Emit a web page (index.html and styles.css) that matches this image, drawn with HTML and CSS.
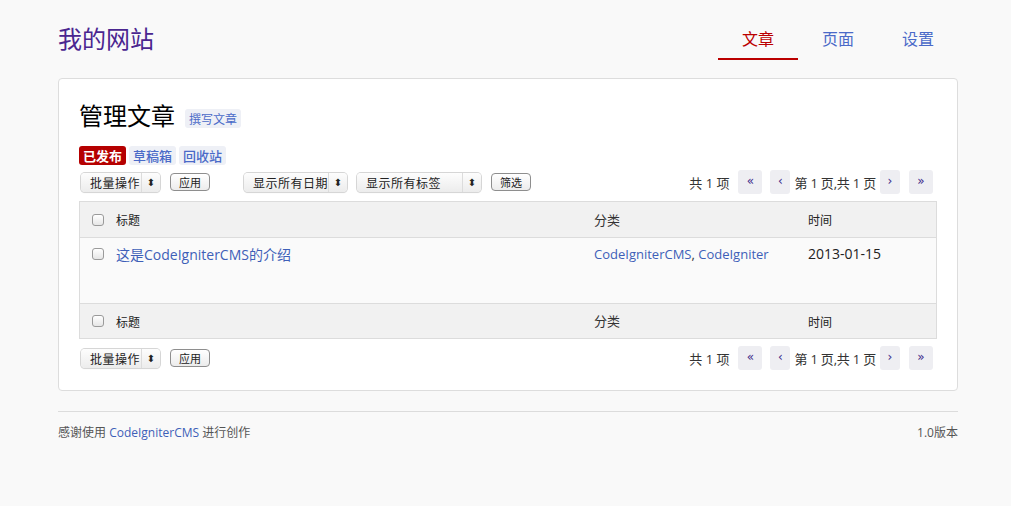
FILE: index.html
```html
<!DOCTYPE html>
<html lang="zh">
<head>
<meta charset="utf-8">
<title>我的网站</title>
<link rel="stylesheet" href="styles.css">
</head>
<body>
<div class="page">
  <header class="top">
    <div class="brand">我的网站</div>
    <nav class="nav">
      <a class="nav-item active">文章</a>
      <a class="nav-item">页面</a>
      <a class="nav-item">设置</a>
    </nav>
  </header>

  <main class="card">
    <div class="title-row">
      <h1 class="title">管理文章</h1>
      <a class="badge-link">撰写文章</a>
    </div>
    <div class="tabs">
      <a class="tab active">已发布</a>
      <a class="tab">草稿箱</a>
      <a class="tab">回收站</a>
    </div>

    <div class="toolbar">
      <div class="tool-left">
        <span class="select w-bulk"><span class="sel-text">批量操作</span><span class="sel-arrow">⬍</span></span>
        <span class="btn">应用</span>
        <span class="select w-date gap-l"><span class="sel-text">显示所有日期</span><span class="sel-arrow">⬍</span></span>
        <span class="select w-tag"><span class="sel-text">显示所有标签</span><span class="sel-arrow">⬍</span></span>
        <span class="btn">筛选</span>
      </div>
      <div class="pager">
        <span class="count">共 1 项</span>
        <a class="pg wide">«</a>
        <a class="pg">‹</a>
        <span class="pg-text">第 1 页,共 1 页</span>
        <a class="pg">›</a>
        <a class="pg wide">»</a>
      </div>
    </div>

    <div class="table">
      <div class="row head">
        <div class="c-check"><span class="cb"></span></div>
        <div class="c-title">标题</div>
        <div class="c-cat">分类</div>
        <div class="c-time">时间</div>
      </div>
      <div class="row body">
        <div class="c-check"><span class="cb"></span></div>
        <div class="c-title"><a class="link post">这是CodeIgniterCMS的介绍</a></div>
        <div class="c-cat"><a class="link">CodeIgniterCMS</a>, <a class="link">CodeIgniter</a></div>
        <div class="c-time date">2013-01-15</div>
      </div>
      <div class="row head foot">
        <div class="c-check"><span class="cb"></span></div>
        <div class="c-title">标题</div>
        <div class="c-cat">分类</div>
        <div class="c-time">时间</div>
      </div>
    </div>

    <div class="toolbar bottom">
      <div class="tool-left">
        <span class="select w-bulk"><span class="sel-text">批量操作</span><span class="sel-arrow">⬍</span></span>
        <span class="btn">应用</span>
      </div>
      <div class="pager">
        <span class="count">共 1 项</span>
        <a class="pg wide">«</a>
        <a class="pg">‹</a>
        <span class="pg-text">第 1 页,共 1 页</span>
        <a class="pg">›</a>
        <a class="pg wide">»</a>
      </div>
    </div>
  </main>

  <footer class="footer">
    <span>感谢使用 <a class="link">CodeIgniterCMS</a> 进行创作</span>
    <span>1.0版本</span>
  </footer>
</div>
</body>
</html>
```

FILE: styles.css
```css
* { box-sizing: border-box; }
html, body { margin: 0; padding: 0; }
body {
  background: #f9f9f9;
  font-family: "Open Sans", "Noto Sans CJK SC", sans-serif;
  color: #222;
}
a { text-decoration: none; cursor: pointer; }

.page {
  width: 900px;
  margin-left: 58px;
}

.top {
  height: 78px;
  display: flex;
  justify-content: space-between;
  align-items: flex-start;
}
.brand {
  margin-top: 22px;
  font-size: 24px;
  line-height: 32px;
  color: #4a2690;
  font-family: "Noto Sans CJK SC", sans-serif;
}
.nav {
  display: flex;
}
.nav-item {
  width: 80px;
  height: 60px;
  padding-top: 26px;
  text-align: center;
  font-size: 16px;
  line-height: 24px;
  color: #4a6ac8;
  font-family: "Noto Sans CJK SC", sans-serif;
}
.nav-item.active {
  color: #b00;
  border-bottom: 2px solid #b00;
}

.card {
  background: #fff;
  border: 1px solid #ddd;
  border-radius: 4px;
  padding: 18px 20px 19px 20px;
}
.title-row {
  display: flex;
  align-items: center;
  gap: 10px;
}
.title {
  margin: 0;
  font-size: 24px;
  line-height: 36px;
  font-weight: normal;
  color: #000;
  font-family: "Noto Sans CJK SC", sans-serif;
}
.badge-link {
  margin-top: 6px;
  background: #eef0f6;
  color: #4a6ac8;
  font-size: 12px;
  line-height: 19px;
  padding: 0 4px;
  border-radius: 3px;
  font-family: "Noto Sans CJK SC", sans-serif;
}

.tabs {
  display: flex;
  gap: 3px;
  margin-top: 13px;
}
.tab {
  background: #eef0f6;
  color: #4a6ac8;
  font-size: 13px;
  font-weight: 500;
  line-height: 19px;
  padding: 0 4px;
  border-radius: 3px;
  font-family: "Noto Sans CJK SC", sans-serif;
}
.tab.active {
  background: #b50000;
  color: #fff;
  font-weight: bold;
}

.toolbar {
  display: flex;
  justify-content: space-between;
  align-items: center;
  margin-top: 4px;
  height: 26px;
  padding-left: 2px;
}
.toolbar.bottom { margin-top: 6px; }
.tool-left {
  display: flex;
  align-items: center;
  gap: 10px;
}
.select {
  display: flex;
  align-items: center;
  height: 19px;
  border-radius: 4px;
  background: linear-gradient(#fdfdfd, #ececec);
  box-shadow: 0 0 0 1px #d6d6d6, 0 1px 1px rgba(0,0,0,0.15);
  font-size: 12px;
  color: #222;
  font-family: "Noto Sans CJK SC", sans-serif;
}
.sel-text {
  flex: 1;
  padding-left: 9px;
  line-height: 19px;
  border-right: 1px solid #dcdcdc;
  height: 19px;
  letter-spacing: 0.5px;
}
.sel-arrow {
  width: 18px;
  text-align: center;
  font-size: 10px;
  line-height: 19px;
  color: #222;
  font-family: "DejaVu Sans", sans-serif;
}
.w-bulk { width: 79px; }
.w-date { width: 103px; }
.w-tag { width: 124px; }
.gap-l { margin-left: 24px; }
.btn {
  height: 18px;
  padding: 0 8px;
  border: 1px solid #8e8e8e;
  border-radius: 4px;
  background: linear-gradient(#ffffff, #ececec);
  font-size: 11px;
  line-height: 16px;
  color: #222;
  font-family: "Noto Sans CJK SC", sans-serif;
}

.pager {
  display: flex;
  align-items: center;
  font-size: 13px;
  color: #333;
  padding-right: 4px;
}
.count { margin-right: 9px; }
.pg {
  width: 20px;
  height: 24px;
  line-height: 22px;
  text-align: center;
  background: #eeeef2;
  border-radius: 3px;
  color: #3a2a8a;
  font-size: 12px;
  font-family: "DejaVu Sans", sans-serif;
}
.pg.wide { width: 24px; }
.pager .pg.wide:nth-of-type(1) { margin-right: 8px; }
.pg-text { margin: 0 4px; letter-spacing: -0.2px; }
.pager .pg.wide:last-child { margin-left: 9px; }

.table {
  margin-top: 6px;
  border: 1px solid #dcdcdc;
}
.row {
  display: flex;
  align-items: flex-start;
}
.row.head {
  height: 35px;
  background: #f1f1f1;
  align-items: center;
  font-size: 12px;
  color: #222;
  font-family: "Noto Sans CJK SC", sans-serif;
}
.row.body {
  height: 67px;
  background: #fafafa;
  border-top: 1px solid #dcdcdc;
  border-bottom: 1px solid #dcdcdc;
  padding-top: 6px;
}
.row.foot { height: 34px; }
.c-check { width: 36px; padding-left: 12px; display: flex; align-items: center; height: 20px; }
.c-title { width: 478px; }
.c-cat { width: 214px; font-size: 13px; color: #333; line-height: 20px; }
.c-time { flex: 1; }
.row.body .c-title, .row.body .c-time { line-height: 20px; }
.cb {
  display: inline-block;
  width: 12px;
  height: 12px;
  border: 1px solid #9a9a9a;
  border-radius: 3px;
  background: linear-gradient(#ffffff, #e6e6e6);
}
.link { color: #3e5fb8; }
.post { font-size: 14px; }
.date { font-size: 14px; color: #222; }

.footer {
  margin-top: 20px;
  border-top: 1px solid #dcdcdc;
  padding-top: 12px;
  display: flex;
  justify-content: space-between;
  font-size: 12px;
  line-height: 18px;
  color: #555;
  font-family: "Open Sans", "Noto Sans CJK SC", sans-serif;
}
```
